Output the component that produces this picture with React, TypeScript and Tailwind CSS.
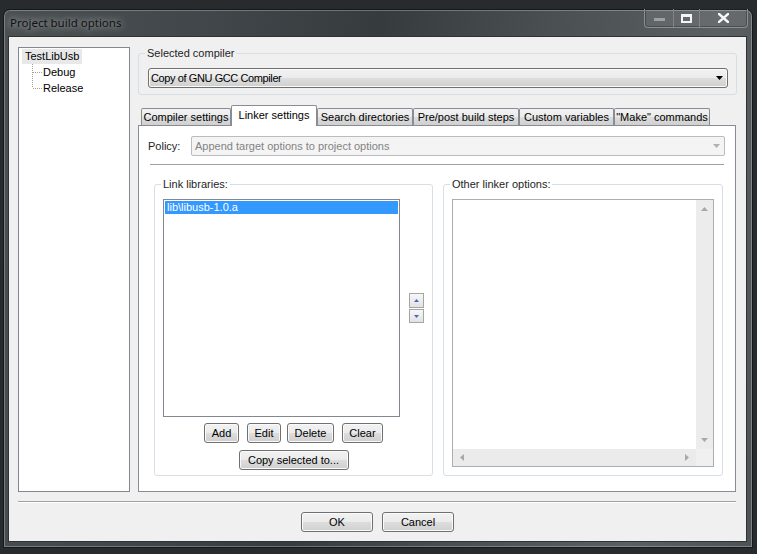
import React from "react";

const btnBase =
  "h-[20px] rounded-[3px] border border-[#707070] bg-[linear-gradient(180deg,#f2f2f2_0%,#ebebeb_48%,#dddddd_52%,#cfcfcf_100%)] shadow-[inset_0_0_0_1px_#fafafa] flex items-center justify-center text-black";

function Btn({ className, children }: { className: string; children: React.ReactNode }) {
  return <div className={`${btnBase} ${className}`}>{children}</div>;
}

function Tab({ label, className, active }: { label: string; className: string; active?: boolean }) {
  if (active) {
    return (
      <div
        className={`relative z-10 -mb-[1px] h-[21px] border border-b-0 border-[#898c95] bg-white rounded-t-[2px] flex justify-center pt-[3px] ${className}`}
      >
        {label}
      </div>
    );
  }
  return (
    <div
      className={`h-[17px] border border-b-0 border-[#898c95] rounded-t-[2px] bg-[linear-gradient(180deg,#f2f2f2_0%,#ebebeb_50%,#dddddd_51%,#cfcfcf_100%)] flex justify-center pt-[2px] ${className}`}
    >
      {label}
    </div>
  );
}

function Connector({ last }: { last?: boolean }) {
  return (
    <svg width="10" height="16" className="shrink-0">
      <line x1="0.5" y1="0" x2="0.5" y2={last ? 8 : 16} stroke="#a0a0a0" strokeDasharray="1 1" />
      <line x1="1" y1="8.5" x2="10" y2="8.5" stroke="#a0a0a0" strokeDasharray="1 1" />
    </svg>
  );
}

function Tri({ dir, color, w = 7, h = 4 }: { dir: "up" | "down" | "left" | "right"; color: string; w?: number; h?: number }) {
  if (dir === "up")
    return (
      <svg width={w} height={h}>
        <polygon points={`0,${h} ${w},${h} ${w / 2},0`} fill={color} />
      </svg>
    );
  if (dir === "down")
    return (
      <svg width={w} height={h}>
        <polygon points={`0,0 ${w},0 ${w / 2},${h}`} fill={color} />
      </svg>
    );
  if (dir === "left")
    return (
      <svg width={h} height={w}>
        <polygon points={`${h},0 ${h},${w} 0,${w / 2}`} fill={color} />
      </svg>
    );
  return (
    <svg width={h} height={w}>
      <polygon points={`0,0 0,${w} ${h},${w / 2}`} fill={color} />
    </svg>
  );
}

export default function App() {
  return (
    <div className="w-[757px] h-[554px] overflow-hidden bg-[#272b2e] pt-[9px] pl-[3px] font-['Liberation_Sans',Arial,sans-serif] text-[11px] leading-[13px] text-black">
      {/* window */}
      <div className="w-[750px] h-[539px] rounded-t-[7px] border border-[#15181a] bg-[linear-gradient(100deg,#4b5053_0%,#41464a_25%,#363b3e_45%,#4a4f52_65%,#5a5f62_85%,#4d5255_100%)] shadow-[inset_0_0_0_1px_rgba(255,255,255,0.28)] flex flex-col px-[4px] pb-[5px]">
        {/* title bar */}
        <div className="h-[26px] flex items-start justify-between">
          <div className="ml-[2px] mt-[5px] font-['Noto_Sans',sans-serif] text-[11.5px] leading-[16px] text-[#111] [text-shadow:0_0_6px_rgba(255,255,255,0.55),0_0_12px_rgba(255,255,255,0.45)]">
            Project build options
          </div>
          <div className="-mt-[1px] h-[19px] flex rounded-b-[4px] border border-t-0 border-[#8a8f92] bg-[rgba(255,255,255,0.08)] shadow-[inset_0_0_0_1px_rgba(0,0,0,0.25)] overflow-hidden">
            <div className="w-[29px] h-full flex items-center justify-center border-r border-[#80858a]">
              <div className="w-[11px] h-[3px] bg-[#9aa0a4] mt-[3px]" />
            </div>
            <div className="w-[26px] h-full flex items-center justify-center border-r border-[#80858a]">
              <svg width="11" height="9">
                <rect x="1" y="1.5" width="9" height="6.5" fill="none" stroke="#f4f4f4" strokeWidth="2" />
                <rect x="0" y="0" width="11" height="3" fill="#f4f4f4" />
              </svg>
            </div>
            <div className="w-[47px] h-full flex items-center justify-center">
              <svg width="11" height="10">
                <path d="M1 1 L10 9 M10 1 L1 9" stroke="#f6f6f6" strokeWidth="2.4" strokeLinecap="square" />
              </svg>
            </div>
          </div>
        </div>

        {/* client */}
        <div className="w-[739px] h-[506px] border border-[#2e3234] bg-[#f0f0f0] flex flex-col pt-[10px] pl-[9px] pr-[9px] pb-[9px]">
          <div className="h-[445px] flex">
            {/* tree */}
            <div className="w-[112px] h-full border border-[#828790] bg-white pl-[3px]">
              <div className="h-[16px] flex items-center">
                <span className="bg-[#e8e8e8] px-[3px] py-[1px] leading-[13px]">TestLibUsb</span>
              </div>
              <div className="h-[16px] flex items-center pl-[10px]">
                <Connector />
                <span className="ml-[1px]">Debug</span>
              </div>
              <div className="h-[16px] flex items-center pl-[10px]">
                <Connector last />
                <span className="ml-[1px]">Release</span>
              </div>
            </div>

            {/* right column */}
            <div className="ml-[8px] w-[599px] flex flex-col">
              <fieldset className="border border-[#d5dfe5] rounded-[3px] pl-[8px] pr-[6px] pt-[8px] pb-[6px]">
                <legend className="px-[2px] -ml-[2px] leading-[13px] text-[#1e1e1e]">Selected compiler</legend>
                <div className="ml-[1px] mr-[2px] h-[20px] rounded-[3px] border border-[#707070] bg-[linear-gradient(180deg,#f2f2f2_0%,#ebebeb_48%,#dddddd_52%,#cfcfcf_100%)] shadow-[inset_0_0_0_1px_#fafafa] flex items-center justify-between pl-[2px] pr-[4px]">
                  <span className="tracking-[-0.4px]">Copy of GNU GCC Compiler</span>
                  <Tri dir="down" color="#000" w={7} h={4} />
                </div>
              </fieldset>

              {/* tabs */}
              <div className="mt-[10px] h-[20px] flex items-end pl-[3px]">
                <Tab label="Compiler settings" className="w-[90px]" />
                <Tab label="Linker settings" className="w-[86px]" active />
                <Tab label="Search directories" className="w-[96px]" />
                <Tab label="Pre/post build steps" className="w-[106px]" />
                <Tab label="Custom variables" className="w-[95px]" />
                <Tab label={'"Make" commands'} className="w-[96px]" />
              </div>

              {/* tab panel */}
              <div className="flex-1 w-[598px] border border-[#898c95] bg-white pt-[10px] pl-[9px] pr-[10px]">
                <div className="h-[20px] flex items-center">
                  <span className="w-[43px] text-[#1e1e1e]">Policy:</span>
                  <div className="flex-1 h-[20px] rounded-[2px] border border-[#b9bcc0] bg-[#f4f4f4] flex items-center justify-between pl-[3px] pr-[4px] text-[#838383]">
                    <span>Append target options to project options</span>
                    <Tri dir="down" color="#b0b0b0" w={7} h={4} />
                  </div>
                </div>
                <div className="mt-[8px] ml-[2px] mr-[1px] h-[1px] bg-[#a0a0a0]" />

                <div className="mt-[13px] ml-[6px] flex gap-[10px]">
                  {/* link libraries */}
                  <fieldset className="w-[279px] border border-[#d5dfe5] rounded-[3px] pl-[8px] pr-[8px] pt-[8px] pb-[5px]">
                    <legend className="px-[2px] -ml-[2px] leading-[13px] text-[#1e1e1e]">Link libraries:</legend>
                    <div className="flex items-center">
                      <div className="w-[237px] h-[218px] border border-[#828790] bg-white p-[1px]">
                        <div className="h-[13px] bg-[#3399ff] text-white pl-[2px] leading-[13px]">lib\libusb-1.0.a</div>
                      </div>
                      <div className="ml-[9px] flex flex-col gap-[1px]">
                        <div className="w-[15px] h-[15px] border border-[#a5a5a5] bg-[linear-gradient(180deg,#f7f7f7,#e2e2e2)] flex items-center justify-center">
                          <Tri dir="up" color="#4a64c8" w={5} h={3} />
                        </div>
                        <div className="w-[15px] h-[14px] border border-[#a5a5a5] bg-[linear-gradient(180deg,#f7f7f7,#e2e2e2)] flex items-center justify-center">
                          <Tri dir="down" color="#4a64c8" w={5} h={3} />
                        </div>
                      </div>
                    </div>
                    <div className="mt-[6px] flex justify-center">
                      <Btn className="w-[35px]">Add</Btn>
                      <Btn className="w-[34px] ml-[8px]">Edit</Btn>
                      <Btn className="w-[47px] ml-[6px]">Delete</Btn>
                      <Btn className="w-[41px] ml-[8px]">Clear</Btn>
                    </div>
                    <div className="mt-[7px] flex justify-center">
                      <Btn className="w-[110px]">Copy selected to...</Btn>
                    </div>
                  </fieldset>

                  {/* other linker options */}
                  <fieldset className="w-[279px] border border-[#d5dfe5] rounded-[3px] pl-[8px] pr-[8px] pt-[8px] pb-[8px]">
                    <legend className="px-[2px] -ml-[2px] leading-[13px] text-[#1e1e1e]">Other linker options:</legend>
                    <div className="w-[262px] h-[268px] border border-[#abadb3] bg-white flex flex-col">
                      <div className="flex-1 flex">
                        <div className="flex-1" />
                        <div className="w-[17px] bg-[#ececec] flex flex-col justify-between items-center py-[7px]">
                          <Tri dir="up" color="#a8a8a8" w={7} h={4} />
                          <Tri dir="down" color="#a8a8a8" w={7} h={4} />
                        </div>
                      </div>
                      <div className="h-[17px] flex">
                        <div className="flex-1 bg-[#ebebeb] flex items-center justify-between px-[7px]">
                          <Tri dir="left" color="#a8a8a8" w={7} h={4} />
                          <Tri dir="right" color="#a8a8a8" w={7} h={4} />
                        </div>
                        <div className="w-[17px] bg-[#f0f0f0]" />
                      </div>
                    </div>
                  </fieldset>
                </div>
              </div>
            </div>
          </div>

          {/* separator */}
          <div className="mt-[9px] mr-[1px] h-[1px] bg-[#a0a0a0]" />
          <div className="h-[1px] bg-white mr-[1px]" />

          {/* dialog buttons */}
          <div className="mt-[9px] flex justify-center gap-[9px]">
            <Btn className="w-[72px]">OK</Btn>
            <Btn className="w-[72px]">Cancel</Btn>
          </div>
        </div>
      </div>
    </div>
  );
}
